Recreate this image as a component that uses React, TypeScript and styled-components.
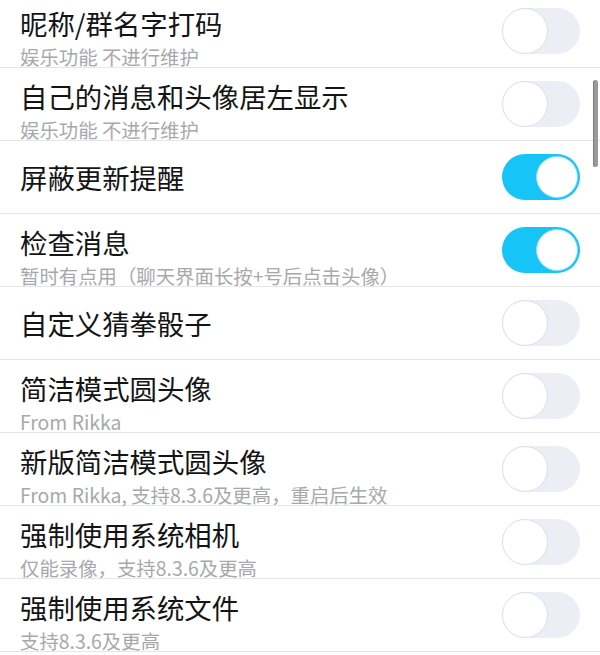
import styled, { createGlobalStyle } from 'styled-components';

const GlobalStyle = createGlobalStyle`
    html, body {
        margin: 0;
        padding: 0;
        background: #ffffff;
        overflow: hidden;
    }
    body {
        font-family: "Noto Sans CJK SC", "Noto Sans", sans-serif;
    }
`;

const Screen = styled.div`
    position: relative;
    width: 600px;
    height: 655px;
    overflow: hidden;
    background: #ffffff;
`;

const List = styled.div`
    display: flex;
    flex-direction: column;
    margin-top: -5px;
`;

const Row = styled.div`
    display: flex;
    align-items: center;
    justify-content: space-between;
    height: 73px;
    box-sizing: border-box;
    padding: 0 20px 0 20px;
    border-bottom: 1px solid #e6e6e9;
`;

const TextBlock = styled.div<{ $twoLine: boolean }>`
    display: flex;
    flex-direction: column;
    align-self: ${p => (p.$twoLine ? 'flex-start' : 'center')};
    padding-top: ${p => (p.$twoLine ? '12px' : '0')};
`;

const Title = styled.div`
    font-size: 27.4px;
    line-height: 32px;
    color: #141416;
    white-space: nowrap;
`;

const Subtitle = styled.div`
    margin-top: 8px;
    font-size: 19.4px;
    line-height: 20px;
    color: #a8a8ac;
    white-space: nowrap;
`;

const Track = styled.div<{ $on: boolean }>`
    display: flex;
    align-items: center;
    justify-content: ${p => (p.$on ? 'flex-end' : 'flex-start')};
    width: 78px;
    height: 46px;
    box-sizing: border-box;
    padding: ${p => (p.$on ? '0 2px' : '0')};
    border-radius: 23px;
    background: ${p => (p.$on ? '#17c4f7' : '#ededf6')};
    flex-shrink: 0;
`;

const Knob = styled.div<{ $on: boolean }>`
    width: ${p => (p.$on ? '42px' : '46px')};
    height: ${p => (p.$on ? '42px' : '46px')};
    box-sizing: border-box;
    border-radius: 50%;
    background: #ffffff;
    border: ${p => (p.$on ? '1px solid #8fdcf7' : '1.5px solid #dedeea')};
`;

const ScrollThumb = styled.div`
    position: absolute;
    top: 80px;
    right: 2px;
    width: 5px;
    height: 87px;
    border-radius: 3px;
    background: #9a9a9a;
    border-left: 1px solid #7c7c7c;
    box-sizing: border-box;
`;

type Setting = {
    title: string;
    subtitle?: string;
    on: boolean;
};

const settings: Setting[] = [
    { title: '昵称/群名字打码', subtitle: '娱乐功能 不进行维护', on: false },
    { title: '自己的消息和头像居左显示', subtitle: '娱乐功能 不进行维护', on: false },
    { title: '屏蔽更新提醒', on: true },
    { title: '检查消息', subtitle: '暂时有点用（聊天界面长按+号后点击头像）', on: true },
    { title: '自定义猜拳骰子', on: false },
    { title: '简洁模式圆头像', subtitle: 'From Rikka', on: false },
    { title: '新版简洁模式圆头像', subtitle: 'From Rikka, 支持8.3.6及更高，重启后生效', on: false },
    { title: '强制使用系统相机', subtitle: '仅能录像，支持8.3.6及更高', on: false },
    { title: '强制使用系统文件', subtitle: '支持8.3.6及更高', on: false },
];

const Switch = ({ on }: { on: boolean }) => (
    <Track $on={on}>
        <Knob $on={on} />
    </Track>
);

export default function App() {
    return (
        <>
            <GlobalStyle />
            <Screen>
                <List>
                    {settings.map(s => (
                        <Row key={s.title}>
                            <TextBlock $twoLine={!!s.subtitle}>
                                <Title>{s.title}</Title>
                                {s.subtitle && <Subtitle>{s.subtitle}</Subtitle>}
                            </TextBlock>
                            <Switch on={s.on} />
                        </Row>
                    ))}
                </List>
                <ScrollThumb />
            </Screen>
        </>
    );
}
